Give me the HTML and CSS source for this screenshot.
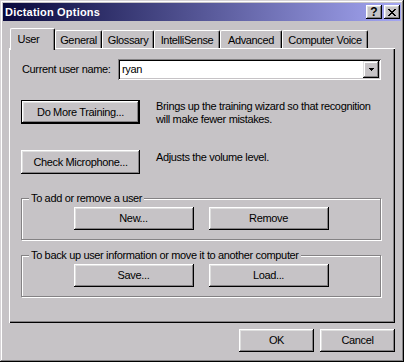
FILE: index.html
```html
<!DOCTYPE html>
<html>
<head>
<meta charset="utf-8">
<link rel="stylesheet" href="styles.css">
</head>
<body>
<div class="window">
  <div class="titlebar">
    <span class="title">Dictation Options</span>
    <div class="caption-btns">
      <span class="cbtn help">?</span>
      <span class="cbtn close">
        <svg width="8" height="7" viewBox="0 0 8 7" shape-rendering="crispEdges"><path fill="#000" d="M0 0h2v1h-2zM6 0h2v1h-2zM1 1h2v1h-2zM5 1h2v1h-2zM2 2h4v1h-4zM3 3h2v1h-2zM2 4h4v1h-4zM1 5h2v1h-2zM5 5h2v1h-2zM0 6h2v1h-2zM6 6h2v1h-2z"/></svg>
      </span>
    </div>
  </div>
  <div class="body">
    <div class="tabs">
      <div class="tab active t-user">User</div>
      <div class="tab t-general">General</div>
      <div class="tab t-glossary">Glossary</div>
      <div class="tab t-intelli">IntelliSense</div>
      <div class="tab t-advanced">Advanced</div>
      <div class="tab t-voice">Computer Voice</div>
    </div>
    <div class="panel">
      <div class="name-row">
        <span class="name-label">Current user name:</span>
        <div class="combo">
          <span class="combo-text">ryan</span>
          <span class="combo-btn">
            <svg width="5" height="3" viewBox="0 0 5 3" shape-rendering="crispEdges"><path fill="#000" d="M0 0h5v1h-5zM1 1h3v1h-3zM2 2h1v1h-1z"/></svg>
          </span>
        </div>
      </div>
      <div class="action-row train">
        <button class="btn default wide">Do More Training...</button>
        <p class="desc">Brings up the training wizard so that recognition<br>will make fewer mistakes.</p>
      </div>
      <div class="action-row mic">
        <button class="btn wide">Check Microphone...</button>
        <p class="desc">Adjusts the volume level.</p>
      </div>
      <div class="group g-user">
        <span class="legend">To add or remove a user</span>
        <div class="group-btns">
          <button class="btn mid">New...</button>
          <button class="btn mid">Remove</button>
        </div>
      </div>
      <div class="group g-backup">
        <span class="legend">To back up user information or move it to another computer</span>
        <div class="group-btns">
          <button class="btn mid">Save...</button>
          <button class="btn mid">Load...</button>
        </div>
      </div>
    </div>
    <div class="footer">
      <button class="btn small">OK</button>
      <button class="btn small">Cancel</button>
    </div>
  </div>
</div>
</body>
</html>
```

FILE: styles.css
```css
* { box-sizing: border-box; }
html, body { margin: 0; padding: 0; }
body {
  background: #c6c3c6;
  font-family: "Liberation Sans", Arial, sans-serif;
  font-size: 11px;
  line-height: 13px;
  letter-spacing: -0.35px;
  color: #000;
}
.window {
  width: 404px;
  height: 362px;
  background: #c6c3c6;
  padding: 3px;
  display: flex;
  flex-direction: column;
  box-shadow: inset -1px -1px #000, inset 1px 1px #d6d3d6, inset -2px -2px #848284, inset 2px 2px #fff;
}
.titlebar {
  height: 18px;
  flex: none;
  display: flex;
  align-items: center;
  padding: 0 1px 0 2px;
  background: linear-gradient(to right, #08083c, #a4a6f2);
  color: #fff;
}
.title { flex: 1; font-weight: bold; letter-spacing: 0.2px; }
.caption-btns { display: flex; gap: 2px; }
.cbtn {
  width: 16px;
  height: 14px;
  display: flex;
  align-items: center;
  justify-content: center;
  background: #c6c3c6;
  color: #000;
  font-weight: bold;
  font-size: 12px;
  letter-spacing: 0;
  box-shadow: inset -1px -1px #000, inset 1px 1px #fff, inset -2px -2px #848284, inset 2px 2px #dfdfdf;
}
.cbtn svg { display: block; }
.body {
  flex: 1;
  display: flex;
  flex-direction: column;
  padding: 7px 6px 0;
}
.tabs {
  height: 20px;
  display: flex;
  align-items: flex-end;
  padding-left: 1px;
}
.tab {
  height: 18px;
  display: flex;
  align-items: center;
  justify-content: center;
  border-top: 1px solid #fff;
  border-left: 1px solid #fff;
  border-right: 1px solid #000;
  border-radius: 2px 2px 0 0;
  box-shadow: inset -1px 0 #848284;
  padding-top: 1px;
  white-space: nowrap;
}
.tab.active {
  height: 22px;
  margin-bottom: -2px;
  position: relative;
  z-index: 1;
  background: #c6c3c6;
  padding: 0 8px 1px 0;
}
.t-user { width: 45px; }
.t-general { width: 47px; }
.t-glossary { width: 52px; }
.t-intelli { width: 66px; }
.t-advanced { width: 62px; }
.t-voice { width: 86px; }
.panel {
  height: 275px;
  flex: none;
  padding: 11px 14px 0 12px;
  display: flex;
  flex-direction: column;
  box-shadow: inset 1px 1px #fff, inset -1px -1px #000, inset -2px -2px #848284;
}
.name-row {
  display: flex;
  align-items: center;
  height: 21px;
}
.name-label { width: 97px; padding-left: 1px; white-space: nowrap; }
.combo {
  flex: 1;
  height: 21px;
  background: #fff;
  display: flex;
  align-items: center;
  padding: 2px;
  box-shadow: inset 1px 1px #848284, inset -1px -1px #fff, inset 2px 2px #000, inset -2px -2px #c6c3c6;
}
.combo-text { flex: 1; padding-left: 2px; }
.combo-btn {
  width: 16px;
  height: 17px;
  display: flex;
  align-items: center;
  justify-content: center;
  background: #c6c3c6;
  box-shadow: inset -1px -1px #000, inset 1px 1px #dfdfdf, inset -2px -2px #848284, inset 2px 2px #fff;
}
.combo-btn svg { display: block; }
.btn {
  font: inherit;
  letter-spacing: inherit;
  color: #000;
  background: #c6c3c6;
  border: none;
  padding: 0;
  margin: 0;
  height: 23px;
  white-space: nowrap;
  box-shadow: inset -1px -1px #000, inset 1px 1px #fff, inset -2px -2px #848284, inset 2px 2px #dfdfdf;
}
.btn.default { border: 1px solid #000; }
.btn.wide { width: 119px; height: 24px; }
.btn.mid { width: 120px; }
.btn.small { width: 75px; }
.action-row {
  display: flex;
  align-items: flex-start;
  gap: 16px;
}
.train { margin-top: 20px; }
.mic { margin-top: 24px; }
.desc { margin: 0; white-space: nowrap; }
.train .desc { padding-top: 0; }
.mic .desc { padding-top: 1px; }
.group {
  height: 42px;
  display: flex;
  flex-direction: column;
  border: 1px solid #848284;
  box-shadow: inset 1px 1px #fff, 1px 1px #fff;
}
.g-user { margin-top: 24px; }
.g-backup { margin-top: 15px; }
.legend {
  align-self: flex-start;
  height: 13px;
  margin: -7px 0 0 7px;
  padding: 0 2px;
  background: #c6c3c6;
  white-space: nowrap;
}
.group-btns {
  margin-top: 2px;
  display: flex;
  justify-content: center;
  gap: 15px;
}
.footer {
  margin-top: 6px;
  display: flex;
  justify-content: flex-end;
  gap: 6px;
}
```
